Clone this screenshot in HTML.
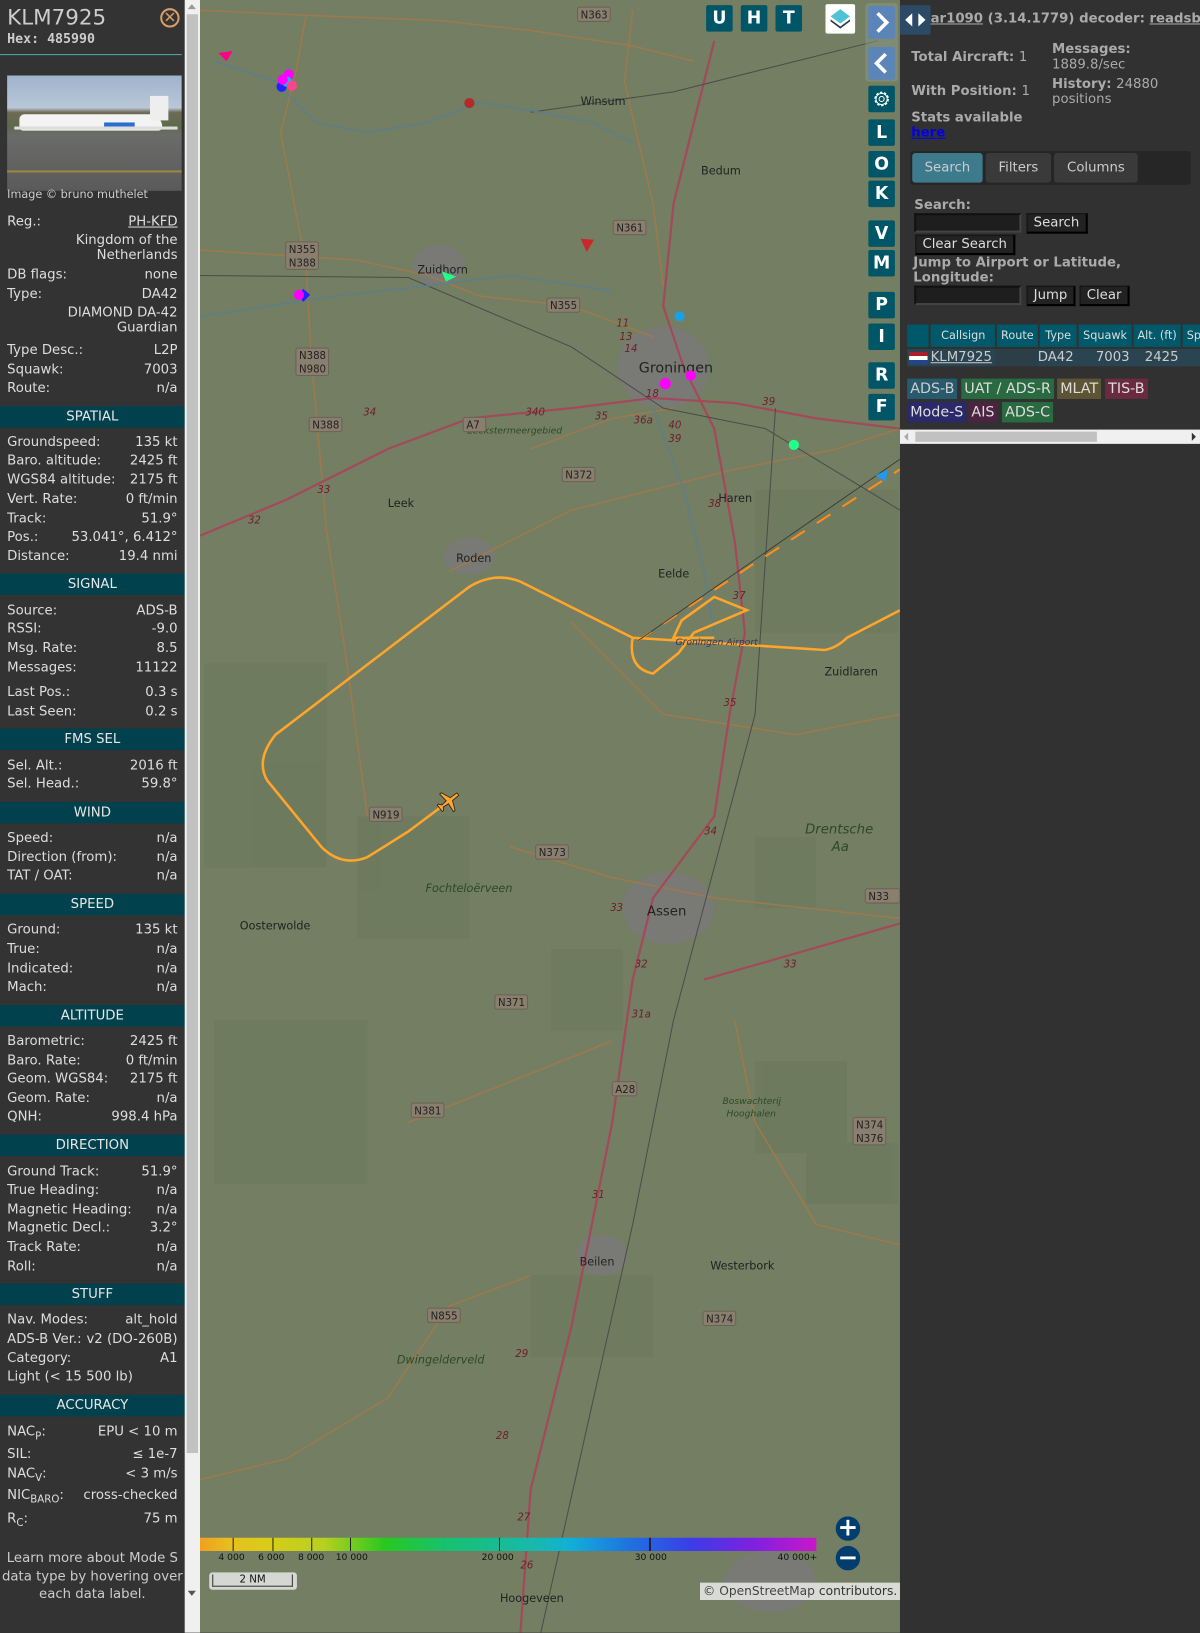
<!DOCTYPE html>
<html><head><meta charset="utf-8"><style>
*{margin:0;padding:0;box-sizing:border-box}
body{width:1200px;height:1600px;overflow:hidden;background:#313131;font-family:"DejaVu Sans","Liberation Sans",sans-serif;position:relative}
#wrap{position:absolute;left:0;top:0;width:1176px;height:1568px;transform:scale(1.0204);transform-origin:0 0}
#left{position:absolute;left:0;top:0;width:181px;height:1600px;background:#333;color:#ddd;font-size:13px}
#vs{position:absolute;left:181px;top:0;width:15px;height:1600px;background:#f0f0f0}
#vs .th{position:absolute;left:2px;top:14px;width:11px;height:1410px;background:#c1c1c1}
.r{position:absolute;left:7px;width:167px;height:17px;line-height:17px;white-space:nowrap}
.r b{font-weight:normal;position:absolute;right:0;top:0}
.h{position:absolute;left:0;width:181px;height:21px;line-height:21px;background:#00414d;color:#e6e6e6;text-align:center;font-size:13px}
#map{position:absolute;left:196px;top:0;width:686px;height:1600px;background:#737e63;overflow:hidden}
.btn{position:absolute;width:26px;height:26px;background:#005666;color:#fff;font-weight:bold;font-size:17px;text-align:center;line-height:26px;border-radius:2px}
.rb{left:655px}
#right{position:absolute;left:882px;top:0;width:318px;height:1600px;background:#313131;color:#aaa;font-size:13px}
.bold{font-weight:bold}
.tab{position:absolute;top:150px;height:29px;line-height:29px;text-align:center;color:#ccc;background:#3a3a3a;border-radius:3px}
.inp{position:absolute;height:19px;background:#1e1e1e;border:2px solid #111;border-right-color:#444;border-bottom-color:#444}
.bt{position:absolute;height:20px;line-height:18px;background:#222;color:#ddd;border:1px solid #111;border-right:2px solid #000;border-bottom:2px solid #000;padding:0 6px}
.badge{position:absolute;height:20px;line-height:20px;padding:0 3px;font-size:14px}
.lbl{font-family:"DejaVu Sans",sans-serif;font-size:11px;fill:#222}
.shield{fill:#8a7e6e;stroke:#6b6256}
</style></head><body><div id="wrap">
<div id="left">
<div style="position:absolute;left:7px;top:5px;font-size:21px;color:#ccc">KLM7925</div>
<div style="position:absolute;left:7px;top:31px;font-family:'DejaVu Sans Mono',monospace;font-weight:bold;font-size:13px;color:#ccc">Hex: 485990</div>
<div style="position:absolute;left:157px;top:8px;width:19px;height:19px;border:2px solid #d9a066;border-radius:50%;color:#d9a066;font-size:15px;line-height:14px;text-align:center">✕</div>
<div style="position:absolute;left:0;top:53px;width:178px;height:1px;background:#4aaab8"></div>
<div style="position:absolute;left:7px;top:74px;width:171px;height:113px;background:linear-gradient(#9fb3cd 0,#b9c7d8 28%,#6e6a55 32%,#5e6a4a 44%,#6b6b6a 52%,#5a5a5a 100%)">
<div style="position:absolute;left:12px;top:38px;width:140px;height:16px;background:#f3f3f3;border-radius:8px 20px 6px 6px"></div>
<div style="position:absolute;left:95px;top:46px;width:30px;height:4px;background:#2a6fd0"></div>
<div style="position:absolute;left:140px;top:20px;width:18px;height:24px;background:#eee"></div>
<div style="position:absolute;left:7px;top:50px;width:160px;height:3px;background:#ddd"></div>
<div style="position:absolute;left:0;top:93px;width:171px;height:2px;background:#9a8a3a"></div>
</div>
<div style="position:absolute;left:7px;top:184px;font-size:11px;color:#ccc">Image © bruno muthelet</div>
<div class="r" style="top:209px">Reg.:<b style="text-decoration:underline">PH-KFD</b></div>
<div class="r" style="top:228px;text-align:right;line-height:15px;height:32px">Kingdom of the<br>Netherlands</div>
<div class="r" style="top:261px">DB flags:<b>none</b></div>
<div class="r" style="top:280px">Type:<b>DA42</b></div>
<div class="r" style="top:299px;text-align:right;line-height:15px;height:32px">DIAMOND DA-42<br>Guardian</div>
<div class="r" style="top:335px">Type Desc.:<b>L2P</b></div>
<div class="r" style="top:354px">Squawk:<b>7003</b></div>
<div class="r" style="top:372px">Route:<b>n/a</b></div>
<div class="h" style="top:398px">SPATIAL</div>
<div class="r" style="top:425px">Groundspeed:<b>135 kt</b></div>
<div class="r" style="top:443px">Baro. altitude:<b>2425 ft</b></div>
<div class="r" style="top:462px">WGS84 altitude:<b>2175 ft</b></div>
<div class="r" style="top:481px">Vert. Rate:<b>0 ft/min</b></div>
<div class="r" style="top:500px">Track:<b>51.9°</b></div>
<div class="r" style="top:518px">Pos.:<b>53.041°, 6.412°</b></div>
<div class="r" style="top:537px">Distance:<b>19.4 nmi</b></div>
<div class="h" style="top:562px">SIGNAL</div>
<div class="r" style="top:590px">Source:<b>ADS-B</b></div>
<div class="r" style="top:608px">RSSI:<b>-9.0</b></div>
<div class="r" style="top:627px">Msg. Rate:<b>8.5</b></div>
<div class="r" style="top:646px">Messages:<b>11122</b></div>
<div class="r" style="top:670px">Last Pos.:<b>0.3 s</b></div>
<div class="r" style="top:689px">Last Seen:<b>0.2 s</b></div>
<div class="h" style="top:714px">FMS SEL</div>
<div class="r" style="top:742px">Sel. Alt.:<b>2016 ft</b></div>
<div class="r" style="top:760px">Sel. Head.:<b>59.8°</b></div>
<div class="h" style="top:786px">WIND</div>
<div class="r" style="top:813px">Speed:<b>n/a</b></div>
<div class="r" style="top:832px">Direction (from):<b>n/a</b></div>
<div class="r" style="top:850px">TAT / OAT:<b>n/a</b></div>
<div class="h" style="top:876px">SPEED</div>
<div class="r" style="top:903px">Ground:<b>135 kt</b></div>
<div class="r" style="top:922px">True:<b>n/a</b></div>
<div class="r" style="top:941px">Indicated:<b>n/a</b></div>
<div class="r" style="top:959px">Mach:<b>n/a</b></div>
<div class="h" style="top:985px">ALTITUDE</div>
<div class="r" style="top:1012px">Barometric:<b>2425 ft</b></div>
<div class="r" style="top:1031px">Baro. Rate:<b>0 ft/min</b></div>
<div class="r" style="top:1049px">Geom. WGS84:<b>2175 ft</b></div>
<div class="r" style="top:1068px">Geom. Rate:<b>n/a</b></div>
<div class="r" style="top:1086px">QNH:<b>998.4 hPa</b></div>
<div class="h" style="top:1112px">DIRECTION</div>
<div class="r" style="top:1140px">Ground Track:<b>51.9°</b></div>
<div class="r" style="top:1158px">True Heading:<b>n/a</b></div>
<div class="r" style="top:1177px">Magnetic Heading:<b>n/a</b></div>
<div class="r" style="top:1195px">Magnetic Decl.:<b>3.2°</b></div>
<div class="r" style="top:1214px">Track Rate:<b>n/a</b></div>
<div class="r" style="top:1233px">Roll:<b>n/a</b></div>
<div class="h" style="top:1258px">STUFF</div>
<div class="r" style="top:1285px">Nav. Modes:<b>alt_hold</b></div>
<div class="r" style="top:1304px">ADS-B Ver.:<b>v2 (DO-260B)</b></div>
<div class="r" style="top:1323px">Category:<b>A1</b></div>
<div class="r" style="top:1341px">Light (&lt; 15 500 lb)</div>
<div class="h" style="top:1367px">ACCURACY</div>
<div class="r" style="top:1395px">NAC<sub style="font-size:10px">P</sub>:<b>EPU &lt; 10 m</b></div>
<div class="r" style="top:1417px">SIL:<b>≤ 1e-7</b></div>
<div class="r" style="top:1436px">NAC<sub style="font-size:10px">V</sub>:<b>&lt; 3 m/s</b></div>
<div class="r" style="top:1457px">NIC<sub style="font-size:10px">BARO</sub>:<b>cross-checked</b></div>
<div class="r" style="top:1480px">R<sub style="font-size:10px">C</sub>:<b>75 m</b></div>
<div style="position:absolute;left:0;top:1519px;width:181px;text-align:center;line-height:17.5px;color:#ccc">Learn more about Mode S data type by hovering over each data label.</div>
</div>
<div id="vs"><div class="th"></div><div style="position:absolute;left:3px;top:4px;border:4px solid transparent;border-bottom:5px solid #999;border-top:0"></div><div style="position:absolute;left:3px;top:1559px;border:4px solid transparent;border-top:5px solid #555;border-bottom:0"></div></div>

<div id="map">
<svg width="686" height="1600" viewBox="196 0 686 1600" style="position:absolute;left:0;top:0">
<g fill="#6d7a5c" opacity=".8">
<rect x="200" y="650" width="120" height="200"/><rect x="350" y="800" width="110" height="120"/><rect x="540" y="930" width="70" height="80"/><rect x="740" y="820" width="60" height="70"/><rect x="740" y="1040" width="90" height="90"/><rect x="210" y="1000" width="150" height="160"/><rect x="520" y="1250" width="120" height="80"/><rect x="740" y="480" width="140" height="140"/><rect x="790" y="1120" width="90" height="60"/></g>
<g fill="#7a7a78" opacity=".9"><ellipse cx="650" cy="360" rx="45" ry="40"/><ellipse cx="655" cy="890" rx="45" ry="35"/><ellipse cx="460" cy="545" rx="25" ry="18"/><ellipse cx="430" cy="260" rx="25" ry="20"/><ellipse cx="755" cy="1550" rx="45" ry="30"/><ellipse cx="590" cy="1230" rx="25" ry="20"/></g>
<g fill="none" stroke="#9b7a4d" stroke-width="1.6">
<path d="M196 10 L300 15 L430 20 L520 30 L620 45 L680 60"/><path d="M300 15 L290 70 L275 130 L300 260 L305 350 L320 520 L340 650 L360 800"/>
<path d="M620 10 L612 80 L640 200 L650 280"/><path d="M196 245 L350 255 L420 270 L470 290 L560 300 L640 330"/>
<path d="M520 440 L600 410 L660 400"/><path d="M440 560 L560 500 L640 480 L720 460 L820 440 L882 420"/>
<path d="M196 1450 L280 1430 L380 1370 L440 1280 L520 1250"/><path d="M500 830 L600 860 L700 880 L882 900"/>
<path d="M560 610 L650 700 L780 720 L882 700"/><path d="M720 1000 L740 1100 L800 1200 L882 1220"/><path d="M400 1100 L500 1060 L600 1020"/></g>
<g fill="none" stroke="#a34a5a" stroke-width="2.2">
<path d="M196 525 L280 490 L380 440 L460 410 L560 400 L640 390 L720 395 L800 410 L882 420"/>
<path d="M700 40 L660 200 L650 300 L670 360 L700 420 L720 530 L730 620 L715 700 L700 800 L640 880 L620 960 L600 1100 L560 1300 L520 1460 L510 1600"/>
<path d="M690 960 L760 940 L882 905"/></g>
<g fill="none" stroke="#4c4c4c" stroke-width="1"><path d="M196 270 L400 272 L560 340 L650 400 L750 420 L882 500"/><path d="M760 400 L740 700 L660 1000 L620 1200 L530 1600"/><path d="M860 40 L660 90 L520 110"/></g>
<g fill="none" stroke="#5c7f8a" stroke-width="1.5"><path d="M210 60 L270 80 L310 120 L360 130 L420 120 L470 100 L530 110 L580 120 L620 140"/><path d="M196 310 L330 290 L420 280 L500 270 L600 285"/><path d="M640 400 L670 480 L690 560 L700 620"/></g>
<path d="M440 785 L400 815 L360 840 Q335 850 315 830 L262 765 Q250 745 270 720 L460 575 Q485 560 510 570 L620 625 L700 630 L808 637 Q820 635 830 625 L882 598 M620 625 Q615 655 640 660 L665 640 L680 620 L732 598 L700 585 L668 608 L660 625 L700 625" fill="none" stroke="#ffa52a" stroke-width="2.5"/>
<path d="M625 628 L735 555 L882 460" fill="none" stroke="#ff8c1a" stroke-width="2" stroke-dasharray="16 14"/>
<path d="M625 628 L882 450" fill="none" stroke="#333" stroke-width=".8"/>
<g class="lbl"><text x="569" y="103">Winsum</text><text x="687" y="171">Bedum</text><text x="409" y="268">Zuidhorn</text><text x="626" y="365" style="font-size:14px">Groningen</text><text x="380" y="497">Leek</text><text x="447" y="551">Roden</text><text x="645" y="566">Eelde</text><text x="704" y="492">Haren</text><text x="808" y="662">Zuidlaren</text><text x="634" y="897" style="font-size:13px">Assen</text><text x="235" y="911">Oosterwolde</text><text x="696" y="1244">Westerbork</text><text x="568" y="1240">Beilen</text><text x="490" y="1570">Hoogeveen</text>
<text x="789" y="817" style="font-size:13px;font-style:italic;fill:#2d4a22">Drentsche</text><text x="815" y="834" style="font-size:13px;font-style:italic;fill:#2d4a22">Aa</text>
<text x="417" y="874" style="font-style:italic;fill:#2d4a22">Fochteloërveen</text><text x="389" y="1336" style="font-style:italic;fill:#2d4a22">Dwingelderveld</text><text x="458" y="425" style="font-size:9px;font-style:italic;fill:#2d4a22">Leekstermeergebied</text><text x="708" y="1082" style="font-size:9px;font-style:italic;fill:#2d4a22">Boswachterij</text><text x="712" y="1094" style="font-size:9px;font-style:italic;fill:#2d4a22">Hooghalen</text><text x="662" y="632" style="font-size:9px;font-style:italic;fill:#3a3560">Groningen Airport</text></g>
<g font-size="10" font-family="DejaVu Sans" fill="#222">
<rect class="shield" x="566" y="7" width="32" height="14" rx="2"/><text x="569" y="18">N363</text>
<rect class="shield" x="601" y="216" width="32" height="14" rx="2"/><text x="604" y="227">N361</text>
<rect class="shield" x="280" y="237" width="32" height="27" rx="2"/><text x="283" y="248">N355</text><text x="283" y="261">N388</text>
<rect class="shield" x="536" y="292" width="32" height="14" rx="2"/><text x="539" y="303">N355</text>
<rect class="shield" x="290" y="341" width="32" height="27" rx="2"/><text x="293" y="352">N388</text><text x="293" y="365">N980</text>
<rect class="shield" x="303" y="409" width="32" height="14" rx="2"/><text x="306" y="420">N388</text>
<rect class="shield" x="454" y="409" width="22" height="14" rx="2"/><text x="457" y="420">A7</text>
<rect class="shield" x="551" y="458" width="32" height="14" rx="2"/><text x="554" y="469">N372</text>
<rect class="shield" x="362" y="791" width="32" height="14" rx="2"/><text x="365" y="802">N919</text>
<rect class="shield" x="525" y="828" width="32" height="14" rx="2"/><text x="528" y="839">N373</text>
<rect class="shield" x="485" y="975" width="32" height="14" rx="2"/><text x="488" y="986">N371</text>
<rect class="shield" x="600" y="1060" width="24" height="14" rx="2"/><text x="603" y="1071">A28</text>
<rect class="shield" x="403" y="1081" width="32" height="14" rx="2"/><text x="406" y="1092">N381</text>
<rect class="shield" x="848" y="871" width="34" height="14" rx="2"/><text x="851" y="882">N33</text>
<rect class="shield" x="836" y="1095" width="32" height="27" rx="2"/><text x="839" y="1106">N374</text><text x="839" y="1119">N376</text>
<rect class="shield" x="419" y="1282" width="32" height="14" rx="2"/><text x="422" y="1293">N855</text>
<rect class="shield" x="689" y="1285" width="32" height="14" rx="2"/><text x="692" y="1296">N374</text></g>
<g font-size="10" font-style="italic" fill="#6e1e2a" font-family="DejaVu Sans"><text x="356" y="407">34</text><text x="311" y="483">33</text><text x="243" y="513">32</text><text x="515" y="407">340</text><text x="583" y="411">35</text><text x="604" y="320">11</text><text x="607" y="333">13</text><text x="612" y="345">14</text><text x="633" y="389">18</text><text x="621" y="415">36a</text><text x="655" y="420">40</text><text x="655" y="433">39</text><text x="694" y="497">38</text><text x="718" y="587">37</text><text x="709" y="692">35</text><text x="690" y="818">34</text><text x="598" y="893">33</text><text x="622" y="948">32</text><text x="768" y="948">33</text><text x="619" y="997">31a</text><text x="580" y="1174">31</text><text x="505" y="1330">29</text><text x="486" y="1410">28</text><text x="507" y="1490">27</text><text x="510" y="1537">26</text><text x="747" y="397">39</text></g>
<g><circle cx="460" cy="101" r="5" fill="#b22a2a"/><circle cx="666" cy="310" r="5" fill="#1aa0e6"/><circle cx="652" cy="376" r="5.5" fill="#f0f"/><circle cx="677" cy="368" r="5" fill="#f0f"/><circle cx="778" cy="436" r="5" fill="#2f8"/><circle cx="276" cy="85" r="5" fill="#22f"/><circle cx="283" cy="73" r="5" fill="#f0f"/><circle cx="281" cy="80" r="5" fill="#2af"/><circle cx="286" cy="84" r="5" fill="#f48"/><circle cx="277" cy="78" r="5" fill="#f0f"/><path d="M297 283 L304 289 L297 296 L293 289Z" fill="#22f"/><circle cx="293" cy="289" r="5" fill="#f0f"/>
<path d="M569 234 L582 235 L575 247Z" fill="#c82828"/><path d="M433 266 L447 271 L437 276Z" fill="#2f8"/><path d="M214 52 L228 50 L222 60Z" fill="#f08"/><path d="M858 466 L870 460 L868 472Z" fill="#29e"/></g>
<g transform="translate(440 785) rotate(52)" fill="#ffa52a" stroke="#222" stroke-width=".8"><path d="M-1.5 -11 L1.5 -11 L1.8 -3 L11 1 L11 3 L1.8 2 L1.2 8 L4 10 L4 11.5 L-4 11.5 L-4 10 L-1.2 8 L-1.8 2 L-11 3 L-11 1 L-1.8 -3Z"/></g>
</svg>
<div class="btn" style="left:496px;top:5px">U</div><div class="btn" style="left:530px;top:5px">H</div><div class="btn" style="left:564px;top:5px">T</div>
<div style="position:absolute;left:613px;top:4px;width:29px;height:29px;background:#fff;border-radius:2px"><svg width="29" height="29"><path d="M14.5 5 L24 12 L14.5 19 L5 12Z" fill="#4fc3d6"/><path d="M5 15 L14.5 22 L24 15 L24 17 L14.5 24 L5 17Z" fill="#2a3a4a"/></svg></div>
<div style="position:absolute;left:652px;top:3px;width:32px;height:77px;background:#8a9a8a;opacity:.5;border-radius:3px"></div>
<div class="btn rb" style="top:6px;height:32px;background:#5b84b8"><svg width="26" height="32"><path d="M9 7 L18 16 L9 25" fill="none" stroke="#fff" stroke-width="3.5"/></svg></div>
<div class="btn rb" style="top:46px;height:32px;background:#5b84b8"><svg width="26" height="32"><path d="M17 7 L8 16 L17 25" fill="none" stroke="#fff" stroke-width="3.5"/></svg></div>
<div class="btn rb" style="top:84px"><svg width="26" height="26"><circle cx="13" cy="13" r="6.5" fill="none" stroke="#fff" stroke-width="1.3" stroke-dasharray="2.5 1.6"/><circle cx="13" cy="13" r="5.5" fill="none" stroke="#fff" stroke-width="1"/><circle cx="13" cy="13" r="2.5" fill="none" stroke="#fff" stroke-width="1"/></svg></div>
<div class="btn rb" style="top:117px">L</div><div class="btn rb" style="top:148px">O</div><div class="btn rb" style="top:177px">K</div><div class="btn rb" style="top:216px">V</div><div class="btn rb" style="top:245px">M</div><div class="btn rb" style="top:286px">P</div><div class="btn rb" style="top:317px">I</div><div class="btn rb" style="top:355px">R</div><div class="btn rb" style="top:386px">F</div>
<div style="position:absolute;left:0;top:1507px;width:604px;height:13px;background:linear-gradient(90deg,#f0a020 0%,#e6c020 5%,#d8cc18 11%,#b8d020 20%,#28c820 30%,#18c070 40%,#18b8b0 55%,#10b0d8 60%,#2070e0 70%,#3c3ce8 80%,#8020e0 90%,#c818c8 100%)"></div>
<div style="position:absolute;left:0;top:1507px;width:604px;height:13px;">
<span style="position:absolute;left:32px;width:1px;height:13px;background:#222"></span><span style="position:absolute;left:71px;width:1px;height:13px;background:#222"></span><span style="position:absolute;left:109px;width:1px;height:13px;background:#222"></span><span style="position:absolute;left:147px;width:1px;height:13px;background:#222"></span><span style="position:absolute;left:293px;width:1px;height:13px;background:#222"></span><span style="position:absolute;left:440px;width:2px;height:13px;background:#224"></span></div>
<div style="position:absolute;top:1522px;left:0;width:620px;font-size:9px;color:#111">
<span style="position:absolute;left:18px">4 000</span><span style="position:absolute;left:57px">6 000</span><span style="position:absolute;left:96px">8 000</span><span style="position:absolute;left:133px">10 000</span><span style="position:absolute;left:276px">20 000</span><span style="position:absolute;left:426px">30 000</span><span style="position:absolute;left:566px">40 000+</span></div>
<div style="position:absolute;left:623px;top:1486px;width:24px;height:24px;border-radius:50%;background:#013e6e;color:#fff;font-size:24px;line-height:23px;text-align:center;font-weight:bold">+</div>
<div style="position:absolute;left:623px;top:1515px;width:24px;height:24px;border-radius:50%;background:#013e6e;color:#fff;font-size:24px;line-height:22px;text-align:center;font-weight:bold">−</div>
<div style="position:absolute;left:9px;top:1541px;width:86px;height:17px;background:rgba(230,230,230,.85);border-radius:3px"><div style="position:absolute;left:3px;top:2px;width:79px;height:12px;border:1px solid #333;border-top:0;font-size:10px;text-align:center;line-height:11px;color:#111">2 NM</div></div>
<div style="position:absolute;left:490px;top:1551px;width:196px;height:17px;background:rgba(235,235,235,.85);font-size:12px;color:#333;padding-left:3px;line-height:17px;white-space:nowrap">© <span style="color:#444">OpenStreetMap</span> contributors.</div>
</div>

<div id="right">
<div style="position:absolute;left:0;top:5px;width:30px;height:29px;background:#2c4a66;border-radius:2px"><svg width="30" height="29"><path d="M5 14.5 L12 8 L12 21Z M25 14.5 L18 8 L18 21Z" fill="#fff"/></svg></div>
<div class="bold" style="position:absolute;left:30px;top:11px;font-size:13px;white-space:nowrap"><u>ar1090</u> (3.14.1779) decoder: <u>readsb</u></div>
<div class="bold" style="position:absolute;left:11px;top:49px">Total Aircraft: <span style="font-weight:normal">1</span></div>
<div class="bold" style="position:absolute;left:11px;top:82px">With Position: <span style="font-weight:normal">1</span></div>
<div class="bold" style="position:absolute;left:149px;top:41px;line-height:15px">Messages:<br><span style="font-weight:normal">1889.8/sec</span></div>
<div class="bold" style="position:absolute;left:149px;top:75px;line-height:15px">History: <span style="font-weight:normal">24880<br>positions</span></div>
<div class="bold" style="position:absolute;left:11px;top:108px;line-height:15px">Stats available<br><u style="color:#00e">here</u></div>
<div style="position:absolute;left:10px;top:148px;width:275px;height:33px;background:#262626;border-radius:3px"></div>
<div class="tab" style="left:12px;width:69px;background:#3d7a8c">Search</div>
<div class="tab" style="left:84px;width:64px">Filters</div>
<div class="tab" style="left:151px;width:82px">Columns</div>
<div class="bold" style="position:absolute;left:14px;top:194px">Search:</div>
<div class="inp" style="left:14px;top:209px;width:105px"></div>
<div class="bt" style="left:124px;top:209px">Search</div>
<div class="bt" style="left:15px;top:230px">Clear Search</div>
<div class="bold" style="position:absolute;left:13px;top:250px;line-height:15px">Jump to Airport or Latitude,<br>Longitude:</div>
<div class="inp" style="left:14px;top:280px;width:105px"></div>
<div class="bt" style="left:124px;top:280px">Jump</div>
<div class="bt" style="left:176px;top:280px">Clear</div>
<div style="position:absolute;left:7px;top:318px;width:311px;height:22px;background:#00596a"></div>
<div style="position:absolute;left:7px;top:318px;height:22px;color:#ddd;font-size:11px;line-height:22px;white-space:nowrap">
<span style="position:absolute;left:21px;width:2px;height:22px;background:#313131"></span><span style="position:absolute;left:24px;width:62px;text-align:center">Callsign</span><span style="position:absolute;left:86px;width:2px;height:22px;background:#313131"></span><span style="position:absolute;left:88px;width:40px;text-align:center">Route</span><span style="position:absolute;left:128px;width:2px;height:22px;background:#313131"></span><span style="position:absolute;left:130px;width:36px;text-align:center">Type</span><span style="position:absolute;left:166px;width:2px;height:22px;background:#313131"></span><span style="position:absolute;left:168px;width:52px;text-align:center">Squawk</span><span style="position:absolute;left:220px;width:2px;height:22px;background:#313131"></span><span style="position:absolute;left:222px;width:46px;text-align:center">Alt. (ft)</span><span style="position:absolute;left:268px;width:2px;height:22px;background:#313131"></span><span style="position:absolute;left:274px">Sp</span></div>
<div style="position:absolute;left:7px;top:342px;width:311px;height:17px;background:#2a4452;color:#ccc;font-size:13px;line-height:17px;white-space:nowrap">
<span style="position:absolute;left:2px;top:3px;width:18px;height:12px;background:linear-gradient(#ae1c28 33%,#fff 33%,#fff 66%,#21468b 66%)"></span><u style="position:absolute;left:23px">KLM7925</u><span style="position:absolute;left:86px;width:42px;height:17px;background:#313131;opacity:.3"></span><span style="position:absolute;left:128px">DA42</span><span style="position:absolute;left:168px;width:50px;text-align:right">7003</span><span style="position:absolute;left:222px;width:44px;text-align:right">2425</span></div>
<div class="badge" style="left:7px;top:371px;background:#285a6e;color:#ccc">ADS-B</div>
<div class="badge" style="left:60px;top:371px;background:#2a6a40;color:#ddd">UAT / ADS-R</div>
<div class="badge" style="left:154px;top:371px;background:#5c5434;color:#ddd">MLAT</div>
<div class="badge" style="left:201px;top:371px;background:#6a2a40;color:#ddd">TIS-B</div>
<div class="badge" style="left:7px;top:394px;background:#2a2a6a;color:#ddd">Mode-S</div>
<div class="badge" style="left:67px;top:394px;background:#4a2440;color:#ddd">AIS</div>
<div class="badge" style="left:100px;top:394px;background:#2a6a40;color:#ddd">ADS-C</div>
<div style="position:absolute;left:0;top:421px;width:294px;height:14px;background:#f0f0f0"><div style="position:absolute;left:15px;top:2px;width:178px;height:10px;background:#c1c1c1"></div><span style="position:absolute;left:4px;top:3px;border:4px solid transparent;border-right:4px solid #aaa;border-left:0"></span><span style="position:absolute;right:4px;top:3px;border:4px solid transparent;border-left:4px solid #333;border-right:0"></span></div>
</div>
</div></body></html>
